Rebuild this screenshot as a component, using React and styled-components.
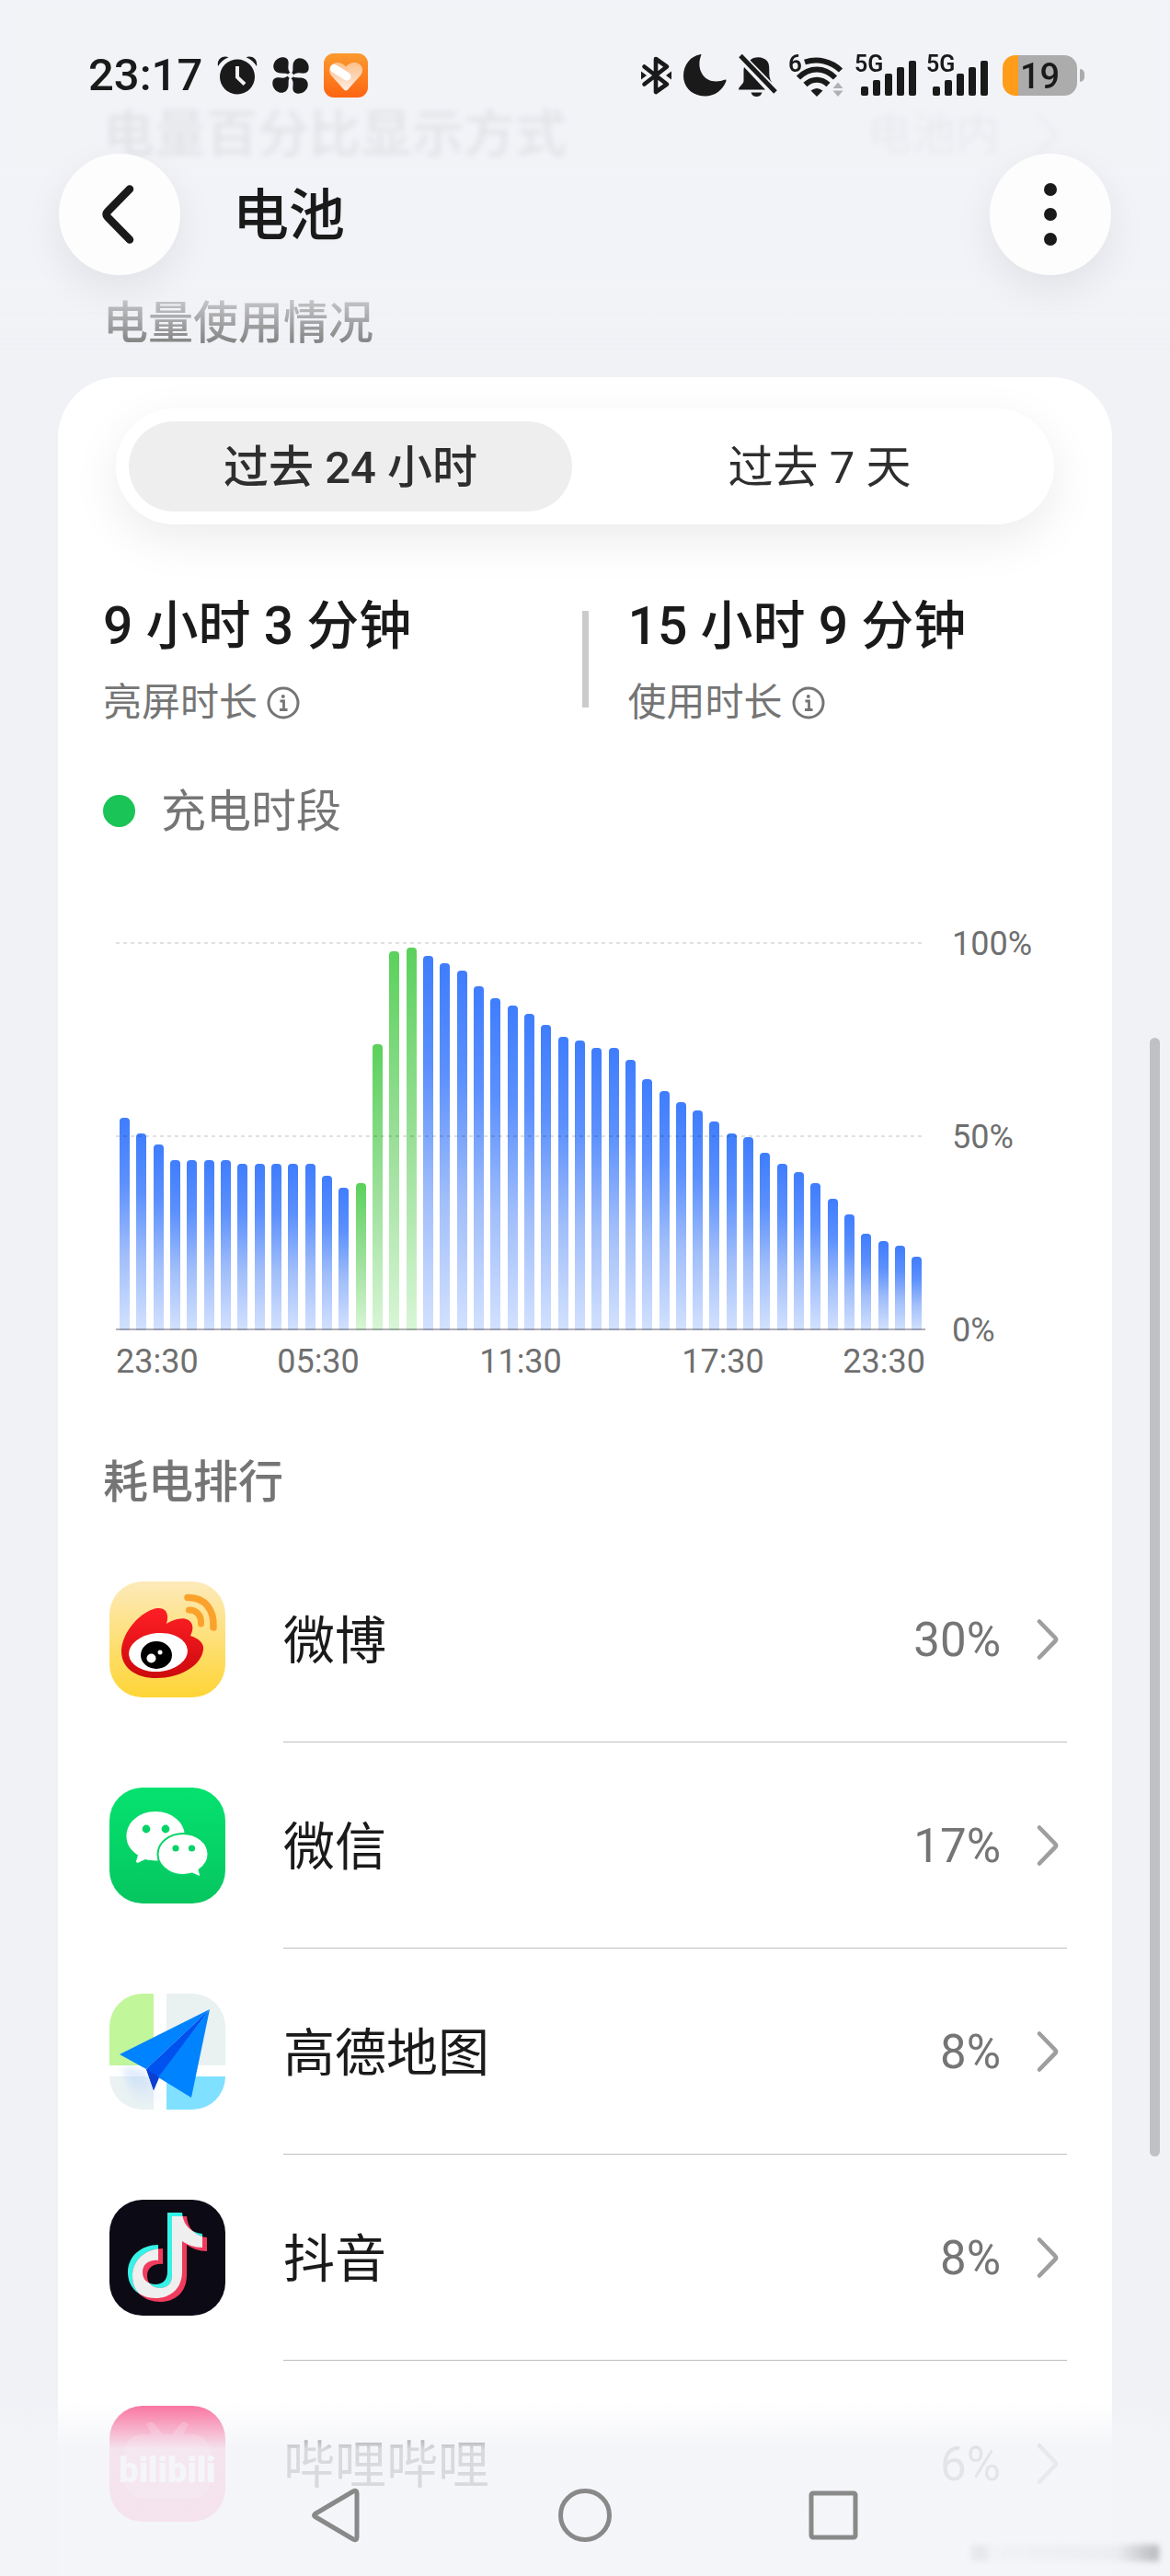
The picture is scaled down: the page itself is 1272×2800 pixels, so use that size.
import React, { useState } from "react";
import styled, { createGlobalStyle } from "styled-components";

const GlobalStyle = createGlobalStyle`
  * { box-sizing: border-box; }
  body {
    margin: 0;
    background: #f1f2f6;
    color: #1a1a1a;
    font-family: Roboto, "Noto Sans CJK SC", sans-serif;
  }
  button { font: inherit; color: inherit; border: 0; background: none; padding: 0; cursor: pointer; }
  a { color: inherit; text-decoration: none; }
  svg { display: block; flex: none; overflow: visible; }
  h1, h2, p, ul, dl, dd, dt { margin: 0; padding: 0; font-weight: inherit; }
`;

const Screen = styled.div`
  min-height: 100vh;
  overflow: hidden;
`;

/* ---------- header that floats over the scrolled content ---------- */

const Header = styled.header`
  position: fixed;
  inset: 0 0 auto;
  z-index: 2;
  height: 384px;
  padding-top: 58px;
  background: linear-gradient(rgba(242, 243, 247, 0.93) 300px, rgba(242, 243, 247, 0));
  pointer-events: none;

  &::before {
    content: "";
    position: absolute;
    inset: 0 0 auto;
    z-index: -1;
    height: 190px;
    backdrop-filter: blur(3px);
  }
`;

const StatusBar = styled.div`
  display: flex;
  align-items: center;
  justify-content: space-between;
  height: 48px;
  padding: 0 93px 0 96px;
`;

const StatusGroup = styled.div`
  display: flex;
  align-items: center;
  gap: ${(p) => p.$gap}px;
`;

const Clock = styled.time`
  font-size: 49px;
  line-height: 48px;
  font-weight: 500;
`;

const Battery = styled.div`
  display: flex;
  align-items: center;
  gap: 3px;
  margin-left: 4px;
`;

const BatteryBody = styled.div`
  width: 81px;
  height: 44px;
  border-radius: 14px;
  background: linear-gradient(90deg, #ff9c1a 17px, #acacac 17px);
  font-size: 38px;
  line-height: 46px;
  font-weight: 500;
  text-align: center;
`;

const BatteryTip = styled.div`
  width: 5px;
  height: 14px;
  border-radius: 0 7px 7px 0;
  background: #acacac;
`;

const AppBar = styled.div`
  display: flex;
  align-items: center;
  margin-top: 61px;
  padding: 0 64px;
`;

const RoundButton = styled.button`
  display: grid;
  place-items: center;
  width: 132px;
  height: 132px;
  border-radius: 50%;
  background: #fdfdfd;
  box-shadow: 0 16px 44px rgba(0, 0, 0, 0.07);
  pointer-events: auto;
`;

const Title = styled.h1`
  flex: 1;
  margin-left: 57px;
  padding-top: 4px;
  font-size: 61px;
  line-height: 80px;
  font-weight: 500;
`;

/* ---------- scrolled content ---------- */

const Content = styled.main`
  padding: 104px 63px 0;
`;

const SettingRow = styled.div`
  display: flex;
  align-items: center;
  height: 80px;
  padding: 4px 58px 0 49px;
`;

const SettingName = styled.span`
  flex: 1;
  font-size: 56px;
  line-height: 80px;
  font-weight: 500;
`;

const SettingValue = styled.span`
  margin-right: 40px;
  font-size: 48px;
  line-height: 80px;
  color: #757575;
`;

const SectionTitle = styled.h2`
  padding: 0 49px;
  font-size: 49px;
  line-height: 64px;
  font-weight: 500;
  color: #757575;
`;

const UsageTitle = styled(SectionTitle)`
  margin: 136px 0 26px;
`;

const RankingTitle = styled(SectionTitle)`
  margin: 78px 0 26px;
`;

const Card = styled.section`
  padding: 34px 0 10px;
  border-radius: 66px 66px 0 0;
  background: #fff;
`;

const Segmented = styled.div`
  display: grid;
  grid-template-columns: 1fr 1fr;
  gap: 28px;
  margin: 0 63px;
  padding: 14px;
  border-radius: 63px;
  background: #fff;
  box-shadow: 0 16px 52px rgba(0, 0, 0, 0.08);
`;

const Segment = styled.button`
  height: 98px;
  padding-top: 4px;
  border-radius: 49px;
  background: ${(p) => (p.$active ? "#eeeeee" : "transparent")};
  color: #2e2e2e;
  font-size: 49px;
  line-height: 94px;
  font-weight: ${(p) => (p.$active ? 500 : 400)};
`;

const Stats = styled.div`
  display: grid;
  grid-template-columns: 1fr 7px 1fr;
  align-items: center;
  margin-top: 71px;
  padding: 0 49px;
`;

const Stat = styled.div`
  padding-left: ${(p) => (p.$inset ? 43 : 0)}px;
`;

const StatValue = styled.p`
  font-size: 57px;
  line-height: 80px;
  font-weight: 500;
`;

const StatLabel = styled.p`
  display: flex;
  align-items: center;
  gap: 10px;
  margin-top: 15px;
  font-size: 42px;
  line-height: 56px;
  color: #757575;
`;

const StatDivider = styled.div`
  height: 105px;
  background: #cbcbcb;
`;

const Legend = styled.p`
  display: flex;
  align-items: center;
  gap: 28px;
  margin-top: 57px;
  padding: 0 49px;
  font-size: 49px;
  line-height: 64px;
  color: #757575;
`;

const LegendText = styled.span`
  padding-top: 4px;
  line-height: 60px;
`;

const LegendDot = styled.span`
  width: 35px;
  height: 35px;
  border-radius: 50%;
  background: #1ac456;
`;

const Chart = styled.div`
  display: grid;
  grid-template-columns: 1fr 125px;
  column-gap: 29px;
  margin-top: 113px;
  padding: 0 49px 0 63px;
  font-size: 36px;
  line-height: 44px;
  color: #6f6f6f;
`;

const Plot = styled.div`
  position: relative;
  display: flex;
  align-items: flex-end;
  justify-content: space-between;
  height: 420px;
  padding: 0 3px 0 4px;
`;

const GridLine = styled.div`
  position: absolute;
  left: 0;
  right: 0;
  bottom: ${(p) => p.$level}%;
  height: 2px;
  background: ${(p) =>
    p.$level === 0
      ? "rgba(80, 80, 90, 0.45)"
      : "repeating-linear-gradient(90deg, rgba(0, 0, 0, 0.12) 0 4px, transparent 4px 8px)"};
`;

const Bar = styled.div`
  width: 11px;
  border-radius: 4px 4px 0 0;
  background: ${(p) =>
    p.$charging
      ? "linear-gradient(#5bd15c, #a0e19e 55%, #d8f6d6)"
      : "linear-gradient(#3f7dfd, #5b90fd 30%, #a2bffa 65%, #d2e1ff)"};
`;

const YAxis = styled.div`
  display: flex;
  flex-direction: column;
  justify-content: space-between;
  margin: -22px 0;
`;

const XAxis = styled.div`
  display: grid;
  grid-template-columns: 1fr 2fr 2fr 2fr 1fr;
  margin-top: 12px;
  text-align: center;

  span:first-child { text-align: left; }
  span:last-child { text-align: right; }
`;

const AppList = styled.ul`
  list-style: none;
  padding: 0 49px;
`;

const AppRow = styled.a`
  display: flex;
  align-items: center;
  height: 224px;
  padding-left: 7px;
`;

const AppBody = styled.span`
  display: flex;
  align-items: center;
  flex: 1;
  align-self: stretch;
  margin-left: 63px;
  padding-right: 9px;
  border-bottom: 1px solid ${(p) => (p.$last ? "transparent" : "#bebebe")};
`;

const AppName = styled.span`
  flex: 1;
  padding-top: 4px;
  font-size: 56px;
  line-height: 80px;
`;

const AppShare = styled.span`
  margin-right: 39px;
  padding-top: 2px;
  font-size: 51px;
  line-height: 80px;
  color: #757575;
`;

/* ---------- overlays at the screen edges ---------- */

const ScrollThumb = styled.div`
  position: fixed;
  right: 11px;
  top: 40.3%;
  z-index: 1;
  width: 11px;
  height: 43.4%;
  border-radius: 6px;
  background: #c1c1c5;
`;

const NavBar = styled.nav`
  position: fixed;
  inset: auto 0 0;
  z-index: 2;
  display: flex;
  align-items: flex-end;
  justify-content: center;
  height: 190px;
  padding-bottom: 30px;
  background: linear-gradient(rgba(243, 244, 248, 0), rgba(243, 244, 248, 0.88) 52px);
`;

const NavButton = styled.button`
  display: grid;
  place-items: center;
  width: 270px;
  height: 72px;
`;

const Smudge = styled.div`
  position: fixed;
  right: 12px;
  bottom: 16px;
  z-index: 3;
  width: 204px;
  height: 18px;
  background: linear-gradient(
    90deg,
    rgba(0, 0, 0, 0.05) 16px,
    rgba(0, 0, 0, 0.01) 20px,
    rgba(0, 0, 0, 0.03) 78%,
    rgba(0, 0, 0, 0.24)
  );
  filter: blur(3px);
`;

/* ---------- drawings ---------- */

const Chevron = () => (
  <svg width="24" height="46" viewBox="0 0 24 46" fill="none" stroke="#9e9e9e" strokeWidth="4.6" strokeLinecap="round" strokeLinejoin="round">
    <path d="M3 3.5 20 21q2 2 0 4L3 42.5" />
  </svg>
);

const BackIcon = () => (
  <svg width="40" height="66" viewBox="0 0 40 66" fill="none" stroke="#1a1a1a" strokeWidth="8.5">
    <path d="M31 5.500 7 30q-3 3 0 6L31 60.500" strokeLinecap="round" strokeLinejoin="round" />
  </svg>
);

const MoreIcon = () => (
  <svg width="16" height="70" viewBox="0 0 16 70" fill="#1a1a1a">
    <circle cx="8" cy="8" r="7" />
    <circle cx="8" cy="35" r="7" />
    <circle cx="8" cy="62" r="7" />
  </svg>
);

const InfoIcon = () => (
  <svg width="36" height="36" viewBox="0 0 36 36" fill="none" stroke="#757575" strokeWidth="3">
    <circle cx="18" cy="18" r="16" />
    <path d="M14.500 16H18.500V25M14 25.500H22.500" strokeWidth="2.800" />
    <circle cx="17.800" cy="11" r="2" fill="#757575" stroke="none" />
  </svg>
);

const AlarmIcon = () => (
  <svg width="44" height="42" viewBox="0 0 44 42" fill="#1a1a1a">
    <circle cx="22" cy="22.500" r="19" />
    <path d="M1 11C-.5 3 6 -1 12.500 1.200 7.500 3.500 3.500 6.500 1 11ZM43 11C44.500 3 38 -1 31.500 1.200 36.500 3.500 40.500 6.500 43 11Z" />
    <path d="M22 11V23L30 30.500" fill="none" stroke="#f2f3f7" strokeWidth="4" />
  </svg>
);

const FanIcon = () => (
  <svg width="40" height="40" viewBox="0 0 40 40" fill="#1a1a1a">
    {[0, 90, 180, 270].map((a) => (
      <path key={a} transform={`rotate(${a} 20 20)`} d="M19 21C16.500 16.500 14 18 8.500 17.500 2.500 17 0 11.500 1.800 7 3.800 2 9 -.5 13.500.5 17.500 1.500 18 5 17.500 9 17 13 17.500 15 21 19Z" />
    ))}
    <circle cx="20" cy="20" r="3" fill="#f2f3f7" />
  </svg>
);

const HeartAppIcon = () => (
  <svg width="48" height="48" viewBox="0 0 48 48">
    <defs>
      <linearGradient id="heartBg" x1="0" y1="0" x2="0" y2="1">
        <stop offset="0" stopColor="#fb9a2e" />
        <stop offset="1" stopColor="#fd6512" />
      </linearGradient>
      <linearGradient id="heartFill" x1="0" y1="0" x2="0" y2="1">
        <stop offset="0" stopColor="#fff" stopOpacity=".45" />
        <stop offset="1" stopColor="#fff" stopOpacity=".9" />
      </linearGradient>
    </defs>
    <rect width="48" height="48" rx="11" fill="url(#heartBg)" />
    <path d="M22 39.500 8.500 24.500C4 19 6 11 13.500 10c4-.5 7.500 1 10.500 4.500C27 11 30.500 9.500 34.500 10 42 11 44.500 19 39.500 24.500L26 39.500Q24 41.500 22 39.500Z" fill="url(#heartFill)" />
    <path d="M11.500 16.500 25 25" stroke="#fff" strokeWidth="9" strokeLinecap="round" />
  </svg>
);

const BluetoothIcon = () => (
  <svg width="34" height="42" viewBox="0 0 34 42" fill="none" stroke="#1a1a1a" strokeWidth="4.600" strokeLinejoin="round" strokeLinecap="round">
    <path d="M3.500 11.500 28 30.500 16 39V3L28 11.500 3.500 30.500" />
    <path d="M0 16.500 6 21 0 25.500ZM33 16.500 27 21 33 25.500Z" fill="#1a1a1a" stroke="none" />
  </svg>
);

const MoonIcon = () => (
  <svg width="47" height="46" viewBox="0 0 47 46" fill="#1a1a1a">
    <path d="M19.500.5C15 11 18 22 26 27c6 3.500 13 3 19.500.5q1.200-.2 1 1.500C43 39 34 45.500 23.500 45.500 10 45.500 0 36 0 23.500 0 11 8 2 18 .2q1.500-.3 1.500.3Z" />
  </svg>
);

const MutedBellIcon = () => (
  <svg width="44" height="46" viewBox="0 0 44 46" fill="#1a1a1a">
    <path d="M1 38.500C1 35 6 33 6.500 29V19C6.500 17 6.500 16 7 14L30 38.500ZM13.500 6.500C18 2 28 2 32.500 8 35 12 34 17 34.500 24q.5 4 3 7ZM14.500 41.500h12q-1.500 4.500-6 4.500t-6-4.500Z" />
    <path d="M3 1.500 41 41" stroke="#1a1a1a" strokeWidth="5" />
  </svg>
);

const WifiIcon = () => (
  <svg width="60" height="48" viewBox="0 0 60 48" fill="none">
    <g stroke="#1a1a1a" strokeWidth="6">
      <path d="M17 9.500C31 5 46 8.500 56 18.500" />
      <path d="M10 26.500C22 14.500 38 14.500 50 26.500" />
      <path d="M17.500 34C25 27 35 27 42.500 34" />
    </g>
    <path d="M30 47 23.500 40.500Q30 35.500 36.500 40.500Z" fill="#1a1a1a" />
    <path d="M53 31.500 58.500 38h-11ZM53 47 58.500 40.500h-11Z" fill="#b0b0b3" />
    <text x="-1" y="20" fontFamily="Roboto, sans-serif" fontSize="26" fontWeight="600" fill="#1a1a1a">6</text>
  </svg>
);

const SignalIcon = () => (
  <svg width="66" height="44" viewBox="0 0 66 44" fill="#1a1a1a">
    <rect x="6" y="34" width="8" height="10" rx="2" />
    <rect x="19" y="27" width="8" height="17" rx="2" />
    <rect x="32" y="20" width="8" height="24" rx="2" />
    <rect x="45" y="13" width="8" height="31" rx="2" />
    <rect x="58" y="6" width="8" height="38" rx="2" />
    <text x="-1" y="18" fontFamily="Roboto, sans-serif" fontSize="25" fontWeight="600">5G</text>
  </svg>
);

const AppIcon = styled.svg.attrs({ width: 126, height: 126, viewBox: "0 0 126 126" })``;

const WeiboIcon = () => (
  <AppIcon>
    <defs>
      <linearGradient id="weiboBg" x1="0" y1="0" x2="0" y2="1">
        <stop offset="0" stopColor="#fdeaba" />
        <stop offset="1" stopColor="#fed535" />
      </linearGradient>
      <linearGradient id="weiboRed" x1="0" y1="0" x2="0" y2="1">
        <stop offset="0" stopColor="#ff1f26" />
        <stop offset="1" stopColor="#cc0a0c" />
      </linearGradient>
    </defs>
    <rect width="126" height="126" rx="36" fill="url(#weiboBg)" />
    <path d="M13 74C14 56 33 32 52 29 62 28 65 36 62 46 69 42 79 38 86 42 92 46 91 53 88 59 97 62 103 67 102 74 100 92 76 105 51 105 28 105 12 93 13 74Z" fill="url(#weiboRed)" />
    <ellipse cx="53" cy="77" rx="32" ry="21" fill="#fff" transform="rotate(-5 53 77)" />
    <ellipse cx="51" cy="80" rx="17" ry="15" fill="#000" />
    <circle cx="45.500" cy="83.500" r="5" fill="#fff" />
    <circle cx="55" cy="77" r="2.500" fill="#fff" />
    <g fill="none" stroke="#fba22c" strokeLinecap="round">
      <path d="M85 17.500C104 17 114 31 113 50" strokeWidth="7.500" />
      <path d="M86.500 31C95 31 100 37 99.500 46" strokeWidth="7" />
    </g>
  </AppIcon>
);

const WechatIcon = () => (
  <AppIcon>
    <defs>
      <linearGradient id="wechatBg" x1="0" y1="0" x2="0" y2="1">
        <stop offset="0" stopColor="#05e26f" />
        <stop offset="1" stopColor="#06c65f" />
      </linearGradient>
    </defs>
    <rect width="126" height="126" rx="36" fill="url(#wechatBg)" />
    <path d="M50 26C32 26 18.500 38 18.500 53 18.500 62 23 68 31 73.500L29 80Q29 82.500 31.500 81.500L39 78C64 84 82 70 82 53 82 38 68 26 50 26Z" fill="#fff" />
    <path d="M80 50C95 50 107.500 60 107.500 72.500 107.500 79 104 85 97.500 89.500L99 95Q99 97.500 96.500 96.500L90 93.500C70 99 52.500 87 52.500 72.500 52.500 60 65 50 80 50Z" fill="#fff" stroke="#06d367" strokeWidth="2" />
    <g fill="#06d367">
      <circle cx="40" cy="45" r="4.400" />
      <circle cx="61" cy="45" r="4.400" />
      <circle cx="72" cy="66" r="3.600" />
      <circle cx="89.500" cy="66" r="3.600" />
    </g>
  </AppIcon>
);

const AmapIcon = () => (
  <AppIcon>
    <defs>
      <clipPath id="amapClip"><rect width="126" height="126" rx="36" /></clipPath>
      <linearGradient id="amapShade" x1="0" y1="0" x2="0" y2="1">
        <stop offset="0" stopColor="#8cb8ff" stopOpacity=".35" />
        <stop offset="1" stopColor="#8cb8ff" stopOpacity="0" />
      </linearGradient>
      <filter id="amapSoft"><feGaussianBlur stdDeviation="4" /></filter>
    </defs>
    <g clipPath="url(#amapClip)">
      <rect width="126" height="126" fill="#fff" />
      <rect width="48" height="78" fill="#c1f69b" />
      <rect x="62" width="64" height="78" fill="#e9f1f1" />
      <rect y="90" width="48" height="36" fill="#eaf2f3" />
      <rect x="62" y="90" width="64" height="36" fill="#80e0ff" />
      <path d="M14 80 40 84 48 104 70 122H28Z" fill="url(#amapShade)" filter="url(#amapSoft)" />
    </g>
    <path d="M109 17 11 66 40 82Z" fill="#0083ff" />
    <path d="M109 17 40 82 48 105 54 91Z" fill="#0052ee" />
    <path d="M40 82 48 105 54 91Z" fill="#0a3fd0" />
    <path d="M109 17 53 91 89 113Z" fill="#0083ff" />
  </AppIcon>
);

const NOTE =
  "M63 14H79C80 27 88 36 101 37V52C92 52 85 49 79 45V78C79 97 66 107 50 107 33 107 20 96 20 79 20 61 35 49 53 49V66C43 65 36 70 36 79 36 87 42 92 50 92 58 92 63 87 63 78Z";

const DouyinIcon = () => (
  <AppIcon>
    <defs>
      <clipPath id="noteClip"><path d={NOTE} transform="translate(5 4)" /></clipPath>
    </defs>
    <rect width="126" height="126" rx="36" fill="#0b0a15" />
    <path d={NOTE} fill="#35f3e6" />
    <path d={NOTE} fill="#f03b5c" transform="translate(5 4)" />
    <path d={NOTE} fill="#efefef" clipPath="url(#noteClip)" />
  </AppIcon>
);

const BilibiliIcon = () => (
  <AppIcon>
    <rect width="126" height="126" rx="36" fill="#fb6b9a" />
    <g fill="#fff" fillOpacity=".2">
      <path d="M40 20q5-5 9 0l9 11H46ZM86 20q-5-5-9 0l-9 11h12Z" />
      <rect x="16" y="31" width="94" height="70" rx="20" />
    </g>
    <text x="63" y="83" textAnchor="middle" fontFamily="Roboto, sans-serif" fontSize="38" fontWeight="900" fill="#fff">bilibili</text>
  </AppIcon>
);

const NavBack = () => (
  <svg width="60" height="60" viewBox="0 0 60 60" fill="none" stroke="#898989" strokeWidth="5" strokeLinejoin="round">
    <path d="M6.500 28.500 48 4q4-2 4 2V54q0 4-4 2L6.500 31.500q-2-1.500 0-3Z" />
  </svg>
);

const NavHome = () => (
  <svg width="60" height="60" viewBox="0 0 60 60" fill="none" stroke="#898989" strokeWidth="5">
    <circle cx="30" cy="30" r="26.500" />
  </svg>
);

const NavRecent = () => (
  <svg width="60" height="60" viewBox="0 0 60 60" fill="none" stroke="#898989" strokeWidth="5">
    <rect x="6" y="6" width="48" height="48" rx="2" />
  </svg>
);

/* ---------- data ---------- */

const LEVELS = [
  55, 51, 48, 44, 44, 44, 44, 43, 43, 43, 43, 43, 40, 37, 38, 74, 98, 99, 97, 95, 93, 89, 86, 84,
  82, 79, 76, 75, 73, 73, 70, 65, 62, 59, 57, 54, 51, 50, 46, 43, 41, 38, 34, 30, 25, 23, 22, 19,
];
const CHARGING = [14, 17];
const TIMES = ["23:30", "05:30", "11:30", "17:30", "23:30"];
const PERIODS = ["过去 24 小时", "过去 7 天"];

const APPS = [
  { name: "微博", share: "30%", Icon: WeiboIcon },
  { name: "微信", share: "17%", Icon: WechatIcon },
  { name: "高德地图", share: "8%", Icon: AmapIcon },
  { name: "抖音", share: "8%", Icon: DouyinIcon },
  { name: "哔哩哔哩", share: "6%", Icon: BilibiliIcon },
];

export default function App() {
  const [period, setPeriod] = useState(0);

  return (
    <Screen>
      <GlobalStyle />
      <Header>
        <StatusBar>
          <StatusGroup $gap={16}>
            <Clock>23:17</Clock>
            <AlarmIcon />
            <FanIcon />
            <HeartAppIcon />
          </StatusGroup>
          <StatusGroup $gap={12}>
            <BluetoothIcon />
            <MoonIcon />
            <MutedBellIcon />
            <WifiIcon />
            <SignalIcon />
            <SignalIcon />
            <Battery>
              <BatteryBody>19</BatteryBody>
              <BatteryTip />
            </Battery>
          </StatusGroup>
        </StatusBar>
        <AppBar>
          <RoundButton aria-label="返回"><BackIcon /></RoundButton>
          <Title>电池</Title>
          <RoundButton aria-label="更多"><MoreIcon /></RoundButton>
        </AppBar>
      </Header>

      <Content>
        <SettingRow>
          <SettingName>电量百分比显示方式</SettingName>
          <SettingValue>电池内</SettingValue>
          <Chevron />
        </SettingRow>

        <UsageTitle>电量使用情况</UsageTitle>
        <Card>
          <Segmented>
            {PERIODS.map((label, i) => (
              <Segment key={label} $active={period === i} aria-pressed={period === i} onClick={() => setPeriod(i)}>
                {label}
              </Segment>
            ))}
          </Segmented>

          <Stats>
            <Stat>
              <StatValue>9 小时 3 分钟</StatValue>
              <StatLabel>亮屏时长<button aria-label="亮屏时长说明"><InfoIcon /></button></StatLabel>
            </Stat>
            <StatDivider />
            <Stat $inset>
              <StatValue>15 小时 9 分钟</StatValue>
              <StatLabel>使用时长<button aria-label="使用时长说明"><InfoIcon /></button></StatLabel>
            </Stat>
          </Stats>

          <Legend><LegendDot /><LegendText>充电时段</LegendText></Legend>

          <Chart>
            <Plot>
              {LEVELS.map((level, i) => (
                <Bar key={i} $charging={i >= CHARGING[0] && i <= CHARGING[1]} style={{ height: `${level}%` }} />
              ))}
              <GridLine $level={100} />
              <GridLine $level={50} />
              <GridLine $level={0} />
            </Plot>
            <YAxis>
              <span>100%</span>
              <span>50%</span>
              <span>0%</span>
            </YAxis>
            <XAxis>
              {TIMES.map((t, i) => <span key={i}>{t}</span>)}
            </XAxis>
          </Chart>

          <RankingTitle>耗电排行</RankingTitle>
          <AppList>
            {APPS.map(({ name, share, Icon }, i) => (
              <li key={name}>
                <AppRow href="#">
                  <Icon />
                  <AppBody $last={i === APPS.length - 1}>
                    <AppName>{name}</AppName>
                    <AppShare>{share}</AppShare>
                    <Chevron />
                  </AppBody>
                </AppRow>
              </li>
            ))}
          </AppList>
        </Card>
      </Content>

      <ScrollThumb />
      <NavBar>
        <NavButton aria-label="后退"><NavBack /></NavButton>
        <NavButton aria-label="主屏幕"><NavHome /></NavButton>
        <NavButton aria-label="最近任务"><NavRecent /></NavButton>
      </NavBar>
      <Smudge />
    </Screen>
  );
}
